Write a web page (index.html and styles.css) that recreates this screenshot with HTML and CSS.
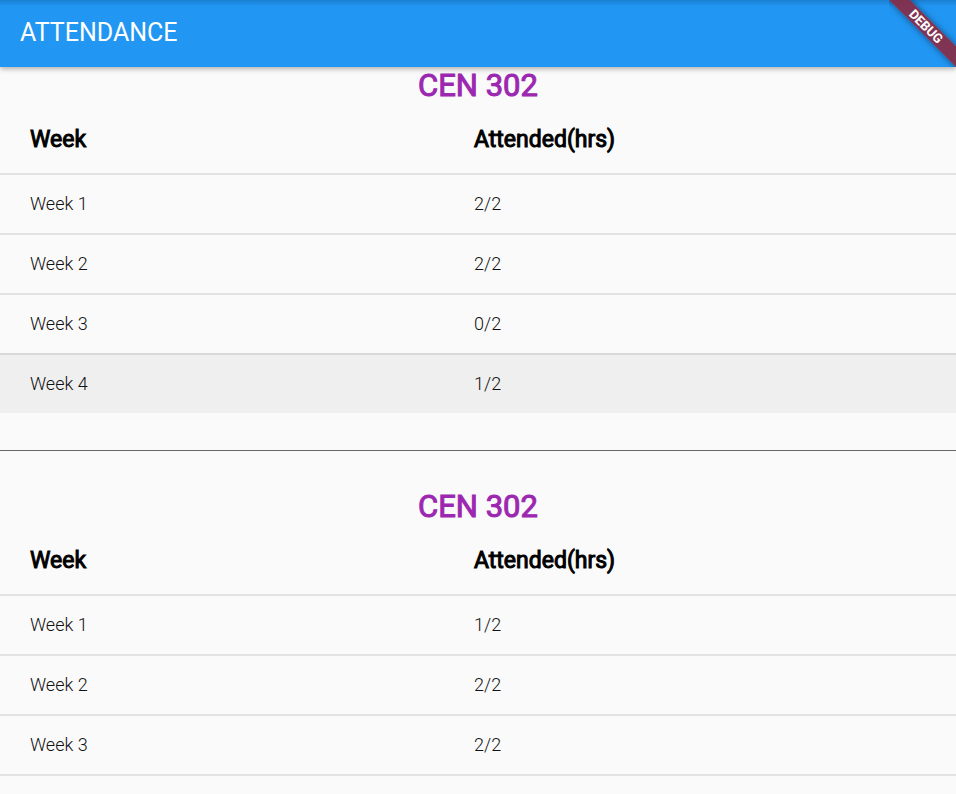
FILE: index.html
```html
<!DOCTYPE html>
<html lang="en">
<head>
<meta charset="utf-8">
<meta name="viewport" content="width=device-width, initial-scale=1">
<title>Attendance</title>
<link rel="stylesheet" href="styles.css">
</head>
<body>
<header class="app-bar">
  <h1 class="app-title">ATTENDANCE</h1>
  <div class="debug-corner"><span class="debug-banner">DEBUG</span></div>
</header>
<main class="content">
  <section class="course">
    <h2 class="course-title">CEN 302</h2>
    <table class="attendance">
      <thead><tr><th>Week</th><th>Attended(hrs)</th></tr></thead>
      <tbody>
        <tr><td>Week 1</td><td>2/2</td></tr>
        <tr><td>Week 2</td><td>2/2</td></tr>
        <tr><td>Week 3</td><td>0/2</td></tr>
        <tr class="hovered"><td>Week 4</td><td>1/2</td></tr>
      </tbody>
    </table>
  </section>
  <hr class="divider">
  <section class="course">
    <h2 class="course-title">CEN 302</h2>
    <table class="attendance">
      <thead><tr><th>Week</th><th>Attended(hrs)</th></tr></thead>
      <tbody>
        <tr><td>Week 1</td><td>1/2</td></tr>
        <tr><td>Week 2</td><td>2/2</td></tr>
        <tr><td>Week 3</td><td>2/2</td></tr>
        <tr><td></td><td></td></tr>
      </tbody>
    </table>
  </section>
</main>
</body>
</html>
```
FILE: styles.css
```css
* {
  box-sizing: border-box;
}

body {
  margin: 0;
  height: 100vh;
  overflow: hidden;
  display: flex;
  flex-direction: column;
  background: #fafafa;
  color: #111;
  font-family: Roboto, sans-serif;
}

.app-bar {
  position: relative;
  z-index: 1;
  flex: none;
  display: flex;
  align-items: center;
  padding: 18px 20px 19px;
  background: linear-gradient(#1a7fd0, #2196f3 6px);
  color: #fff;
  box-shadow: 0 2px 5px rgba(0, 0, 0, 0.3);
}

.app-title {
  margin: 0;
  font-size: 25px;
  line-height: 30px;
  font-weight: 400;
}

.debug-corner {
  position: absolute;
  top: 0;
  right: 0;
  width: 67px;
  height: 67px;
  overflow: hidden;
}

.debug-banner {
  position: absolute;
  top: 19px;
  right: -40px;
  width: 140px;
  background: rgba(145, 35, 55, 0.85);
  box-shadow: 0 0 6px rgba(0, 0, 0, 0.5);
  font-size: 13px;
  line-height: 15px;
  font-weight: 700;
  text-align: center;
  transform: rotate(45deg);
}

.content {
  flex: 1;
  overflow: hidden;
}

.course-title {
  margin: 0;
  color: #9c27b0;
  font-size: 31px;
  line-height: 37px;
  font-weight: 400;
  text-align: center;
  -webkit-text-stroke: 1px currentColor;
}

.attendance {
  width: 100%;
  border-collapse: separate;
  border-spacing: 0;
  table-layout: fixed;
}

.attendance th,
.attendance td {
  padding: 0 30px;
  text-align: left;
}

.attendance th {
  height: 69px;
  padding-top: 2px;
  color: #000;
  font-size: 23px;
  font-weight: 400;
  -webkit-text-stroke: 1px currentColor;
}

.attendance td {
  height: 60px;
  padding-bottom: 2px;
  border-top: 2px solid #e3e3e3;
  font-size: 18px;
  font-weight: 300;
}

.attendance th:first-child {
  width: 444px;
}

.attendance .hovered td {
  border-top-color: #d9d9d9;
  background: #efefef;
}

.divider {
  margin: 37px 0;
  border: 0;
  border-top: 1px solid #666;
}
```
